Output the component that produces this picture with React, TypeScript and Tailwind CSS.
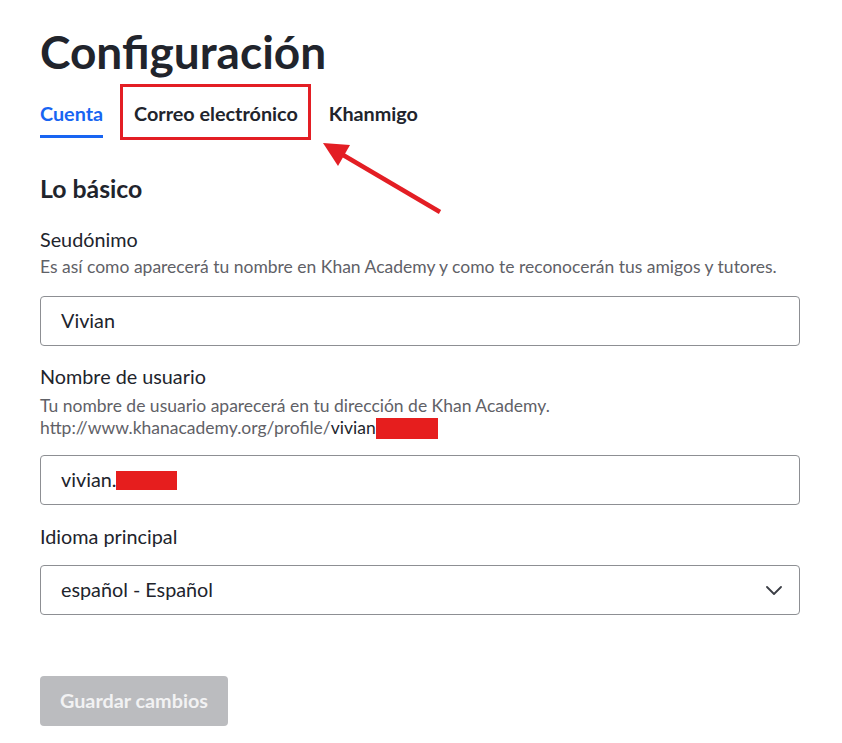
function Field({ label, children }: { label: string; children: React.ReactNode }) {
  return (
    <div>
      <div className="text-[19.8px] leading-[22px] text-[#21242c]">{label}</div>
      {children}
    </div>
  );
}

export default function App() {
  return (
    <div className="relative min-h-screen bg-white font-['Lato',sans-serif] text-[#21242c]">
      <div className="w-[760px] ml-10 pt-[27px]">
        <h1 className="text-[46px] leading-[50px] font-bold">Configuración</h1>

        {/* tabs */}
        <div className="flex gap-[31px] mt-[25px] text-[19.8px] leading-[22px] font-bold">
          <div className="flex flex-col">
            <span className="text-[#1865f2]">Cuenta</span>
            <span className="mt-[11px] h-[3px] bg-[#1865f2]" />
          </div>
          <span>Correo electrónico</span>
          <span>Khanmigo</span>
        </div>

        <h2 className="mt-[36px] text-[24.8px] leading-[29px] font-bold">Lo básico</h2>

        <div className="mt-[25px]">
          <Field label="Seudónimo">
            <p className="mt-[6px] text-[17.5px] leading-[22px] text-[#5f6167]">
              Es así como aparecerá tu nombre en Khan Academy y como te reconocerán tus amigos y tutores.
            </p>
            <div className="mt-[18px] h-[50px] rounded-[4px] border border-[#8d8f93] flex items-center px-5 text-[19.8px]">
              Vivian
            </div>
          </Field>
        </div>

        <div className="mt-[19px]">
          <Field label="Nombre de usuario">
            <p className="mt-[8px] text-[17.5px] leading-[22px] text-[#5f6167]">
              Tu nombre de usuario aparecerá en tu dirección de Khan Academy.
              <br />
              http://www.khanacademy.org/profile/<span className="text-[#21242c]">vivian</span>
              <span className="inline-block align-[-5px] w-[62px] h-[21px] bg-[#e61e1e]" />
            </p>
            <div className="mt-[16px] h-[50px] rounded-[4px] border border-[#8d8f93] flex items-center px-5 text-[19.8px]">
              vivian.
              <span className="inline-block w-[61px] h-[19px] bg-[#e61e1e]" />
            </div>
          </Field>
        </div>

        <div className="mt-[20px]">
          <Field label="Idioma principal">
            <div className="mt-[18px] h-[50px] rounded-[4px] border border-[#8d8f93] flex items-center justify-between pl-5 pr-[17px] text-[19.8px]">
              <span>español - Español</span>
              <svg width="16" height="9" viewBox="0 0 16 9" fill="none">
                <polyline points="1,1 8,8 15,1" stroke="#3b3e45" strokeWidth="1.8" strokeLinecap="round" strokeLinejoin="round" />
              </svg>
            </div>
          </Field>
        </div>

        <button className="mt-[61px] h-[50px] px-5 rounded-[4px] bg-[#bbbcbf] text-[19.8px] font-bold text-[#f2f2f3]">
          Guardar cambios
        </button>
      </div>

      {/* annotation */}
      <div className="absolute left-[120px] top-[84px] w-[191px] h-[56px] border-[3px] border-[#e31e24]" />
      <svg className="absolute left-0 top-0 pointer-events-none" width="842" height="743">
        <line x1="440" y1="212" x2="338" y2="152" stroke="#e31e24" strokeWidth="4.5" />
        <polygon points="323,143 350,145 338,166" fill="#e31e24" />
      </svg>
    </div>
  );
}
